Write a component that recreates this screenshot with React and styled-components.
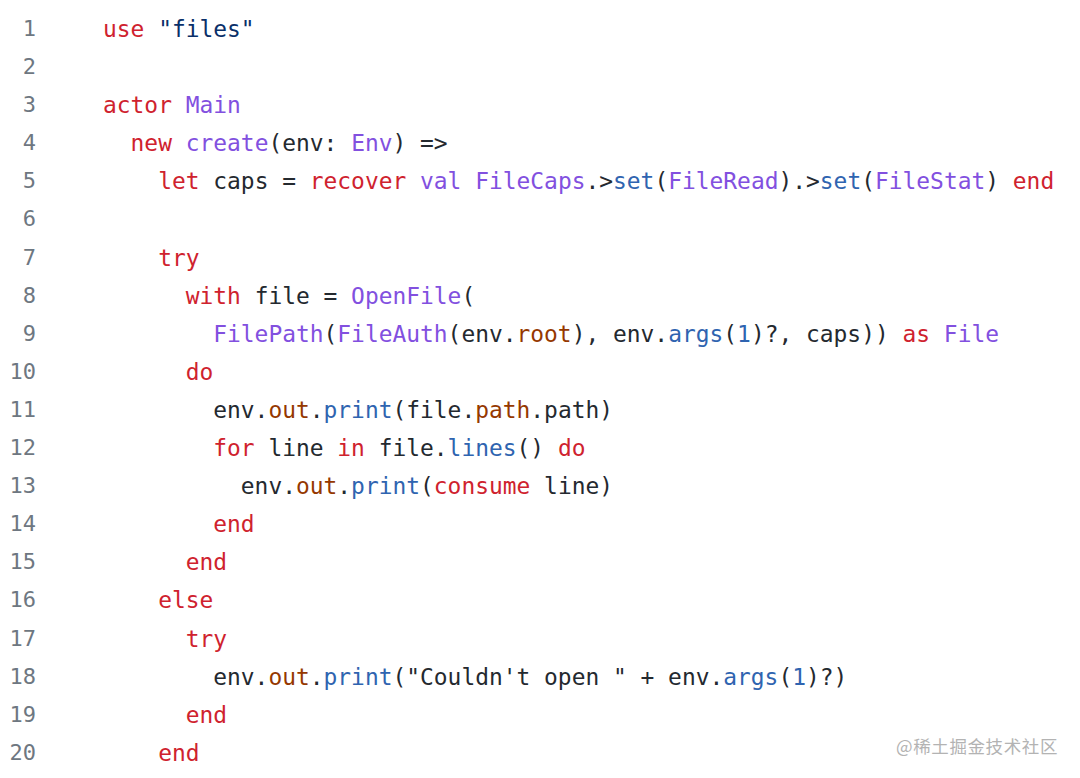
import React from "react";
import styled, { createGlobalStyle } from "styled-components";

const GlobalStyle = createGlobalStyle`
  html, body {
    margin: 0;
    padding: 0;
    background: #ffffff;
  }
`;

const colors = {
  text: "#24292f",
  keyword: "#cf222e",
  type: "#8250df",
  func: "#2f64b0",
  prop: "#953800",
  string: "#0a3069",
  number: "#2f64b0",
  gutter: "#6e7781",
};

const Page = styled.div`
  position: relative;
  width: 1080px;
  height: 778px;
  overflow: hidden;
  background: #ffffff;
`;

const Listing = styled.div`
  display: grid;
  grid-template-columns: 36px 1fr;
  column-gap: 67px;
  padding-top: 10px;
  font-family: "DejaVu Sans Mono", "Liberation Mono", monospace;
  font-size: 22.9px;
  line-height: 38.1px;
`;

const LineNo = styled.div`
  text-align: right;
  color: ${colors.gutter};
  font-size: 22px;
`;

const Code = styled.div`
  white-space: pre;
  color: ${colors.text};
`;

const Tok = styled.span`
  color: ${(p) => colors[p.$kind] || colors.text};
`;

const Watermark = styled.div`
  position: absolute;
  right: 22px;
  bottom: 20px;
  font-family: "Noto Sans CJK SC", "Noto Sans", sans-serif;
  font-size: 17.5px;
  color: #b3b3b3;
  letter-spacing: 0.6px;
`;

// [kind, text] pairs, plain text when kind is empty
const lines = [
  [["keyword", "use"], ["", " "], ["string", '"files"']],
  [],
  [["keyword", "actor"], ["", " "], ["type", "Main"]],
  [["", "  "], ["keyword", "new"], ["", " "], ["type", "create"], ["", "(env: "], ["type", "Env"], ["", ") =>"]],
  [
    ["", "    "], ["keyword", "let"], ["", " caps = "], ["keyword", "recover"], ["", " "],
    ["type", "val"], ["", " "], ["type", "FileCaps"], ["", ".>"], ["func", "set"], ["", "("],
    ["type", "FileRead"], ["", ").>"], ["func", "set"], ["", "("], ["type", "FileStat"], ["", ") "],
    ["keyword", "end"],
  ],
  [],
  [["", "    "], ["keyword", "try"]],
  [["", "      "], ["keyword", "with"], ["", " file = "], ["type", "OpenFile"], ["", "("]],
  [
    ["", "        "], ["type", "FilePath"], ["", "("], ["type", "FileAuth"], ["", "(env."],
    ["prop", "root"], ["", "), env."], ["func", "args"], ["", "("], ["number", "1"],
    ["", ")?, caps)) "], ["keyword", "as"], ["", " "], ["type", "File"],
  ],
  [["", "      "], ["keyword", "do"]],
  [["", "        env."], ["prop", "out"], ["", "."], ["func", "print"], ["", "(file."], ["prop", "path"], ["", ".path)"]],
  [["", "        "], ["keyword", "for"], ["", " line "], ["keyword", "in"], ["", " file."], ["func", "lines"], ["", "() "], ["keyword", "do"]],
  [["", "          env."], ["prop", "out"], ["", "."], ["func", "print"], ["", "("], ["keyword", "consume"], ["", " line)"]],
  [["", "        "], ["keyword", "end"]],
  [["", "      "], ["keyword", "end"]],
  [["", "    "], ["keyword", "else"]],
  [["", "      "], ["keyword", "try"]],
  [
    ["", "        env."], ["prop", "out"], ["", "."], ["func", "print"], ["", '("Couldn\'t open " + env.'],
    ["func", "args"], ["", "("], ["number", "1"], ["", ")?)"],
  ],
  [["", "      "], ["keyword", "end"]],
  [["", "    "], ["keyword", "end"]],
];

export default function App() {
  return (
    <Page>
      <GlobalStyle />
      <Listing>
        {lines.map((toks, i) => (
          <React.Fragment key={i}>
            <LineNo>{i + 1}</LineNo>
            <Code>
              {toks.length === 0
                ? " "
                : toks.map(([kind, text], j) => (
                    <Tok key={j} $kind={kind}>
                      {text}
                    </Tok>
                  ))}
            </Code>
          </React.Fragment>
        ))}
      </Listing>
      <Watermark>@稀土掘金技术社区</Watermark>
    </Page>
  );
}
